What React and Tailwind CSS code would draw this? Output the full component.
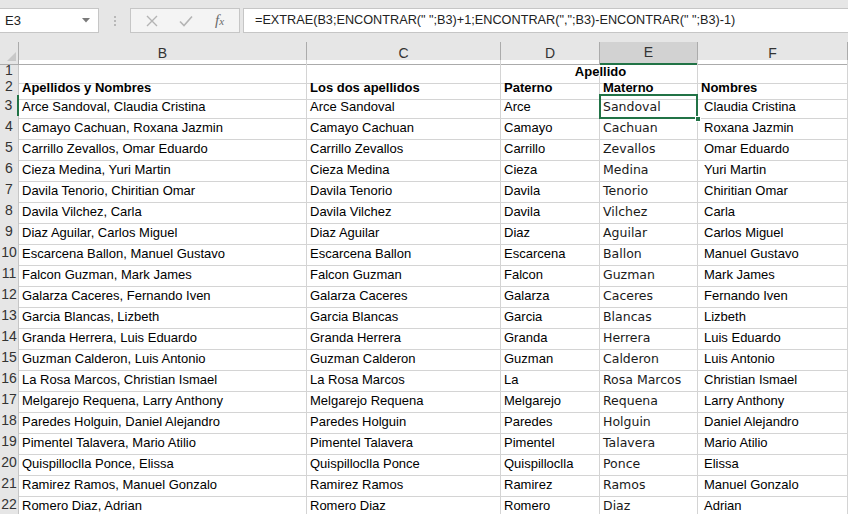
import React from 'react';

const ROWS = [
    ['Arce Sandoval, Claudia Cristina', 'Arce Sandoval', 'Arce', 'Sandoval', 'Claudia Cristina'],
    ['Camayo Cachuan, Roxana Jazmin', 'Camayo Cachuan', 'Camayo', 'Cachuan', 'Roxana Jazmin'],
    ['Carrillo Zevallos, Omar Eduardo', 'Carrillo Zevallos', 'Carrillo', 'Zevallos', 'Omar Eduardo'],
    ['Cieza Medina, Yuri Martin', 'Cieza Medina', 'Cieza', 'Medina', 'Yuri Martin'],
    ['Davila Tenorio, Chiritian Omar', 'Davila Tenorio', 'Davila', 'Tenorio', 'Chiritian Omar'],
    ['Davila Vilchez, Carla', 'Davila Vilchez', 'Davila', 'Vilchez', 'Carla'],
    ['Diaz Aguilar, Carlos Miguel', 'Diaz Aguilar', 'Diaz', 'Aguilar', 'Carlos Miguel'],
    ['Escarcena Ballon, Manuel Gustavo', 'Escarcena Ballon', 'Escarcena', 'Ballon', 'Manuel Gustavo'],
    ['Falcon Guzman, Mark James', 'Falcon Guzman', 'Falcon', 'Guzman', 'Mark James'],
    ['Galarza Caceres, Fernando Iven', 'Galarza Caceres', 'Galarza', 'Caceres', 'Fernando Iven'],
    ['Garcia Blancas, Lizbeth', 'Garcia Blancas', 'Garcia', 'Blancas', 'Lizbeth'],
    ['Granda Herrera, Luis Eduardo', 'Granda Herrera', 'Granda', 'Herrera', 'Luis Eduardo'],
    ['Guzman Calderon, Luis Antonio', 'Guzman Calderon', 'Guzman', 'Calderon', 'Luis Antonio'],
    ['La Rosa Marcos, Christian Ismael', 'La Rosa Marcos', 'La', 'Rosa Marcos', 'Christian Ismael'],
    ['Melgarejo Requena, Larry Anthony', 'Melgarejo Requena', 'Melgarejo', 'Requena', 'Larry Anthony'],
    ['Paredes Holguin, Daniel Alejandro', 'Paredes Holguin', 'Paredes', 'Holguin', 'Daniel Alejandro'],
    ['Pimentel Talavera, Mario Atilio', 'Pimentel Talavera', 'Pimentel', 'Talavera', 'Mario Atilio'],
    ['Quispilloclla Ponce, Elissa', 'Quispilloclla Ponce', 'Quispilloclla', 'Ponce', 'Elissa'],
    ['Ramirez Ramos, Manuel Gonzalo', 'Ramirez Ramos', 'Ramirez', 'Ramos', 'Manuel Gonzalo'],
    ['Romero Diaz, Adrian', 'Romero Diaz', 'Romero', 'Diaz', 'Adrian'],
];

const GRID = 'grid grid-cols-[19px_288px_194px_99px_98px_1fr]';
const CELL = 'border-r border-b border-[#d4d4d4] pl-[3px] flex items-end pb-[2px] whitespace-nowrap overflow-hidden';
const ROWNUM = 'bg-[#e6e6e6] border-r border-b border-[#c6c6c6] text-[#333] flex items-end justify-center pb-[2px] text-[14px]';

function Toolbar() {
    return (
        <div className="flex items-center h-[42px] bg-[#e6e6e6] pb-[1px]">
            {/* name box */}
            <div className="w-[99px] h-[25px] bg-white border border-l-0 border-[#c6c6c6] flex items-center justify-between pl-[5px] pr-[8px] text-[13px] text-[#222]">
                <span>E3</span>
                <svg width="8" height="5" viewBox="0 0 8 5"><path d="M0 0h8L4 4.5z" fill="#7a7a7a" /></svg>
            </div>
            <div className="w-[31px] flex flex-col items-center gap-[2px]">
                <span className="w-[2px] h-[2px] bg-[#b8b8b8]" />
                <span className="w-[2px] h-[2px] bg-[#b8b8b8]" />
                <span className="w-[2px] h-[2px] bg-[#b8b8b8]" />
            </div>
            {/* cancel / enter / fx */}
            <div className="w-[110px] h-[25px] bg-[#f4f4f4] border border-[#c6c6c6] flex items-center justify-around px-[4px]">
                <svg width="12" height="12" viewBox="0 0 12 12">
                    <path d="M1 1L11 11M11 1L1 11" stroke="#b4b4b4" strokeWidth="1.4" />
                </svg>
                <svg width="14" height="12" viewBox="0 0 14 12">
                    <path d="M1 6.5L5 10.5L13 1.5" stroke="#b4b4b4" strokeWidth="1.6" fill="none" />
                </svg>
                <span className="text-[#6a6a6a] italic text-[15px] leading-none" style={{ fontFamily: '"Liberation Serif", serif' }}>
                    f<span className="text-[11px]">x</span>
                </span>
            </div>
            {/* formula */}
            <div className="flex-1 ml-[3px] h-[25px] bg-white border border-r-0 border-[#c6c6c6] flex items-center pl-[11px] text-[12.7px] text-[#222] whitespace-nowrap">
                =EXTRAE(B3;ENCONTRAR(" ";B3)+1;ENCONTRAR(",";B3)-ENCONTRAR(" ";B3)-1)
            </div>
        </div>
    );
}

function ColumnHeaders() {
    const cols = ['B', 'C', 'D', 'E', 'F'];
    return (
        <div className={`${GRID} h-[18px] bg-[#e6e6e6] text-[14px] text-[#333]`}>
            <div className="border-r border-b border-[#ababab] relative">
                <svg className="absolute right-[2px] bottom-[3px]" width="9" height="9" viewBox="0 0 9 9">
                    <path d="M9 0V9H0z" fill="#c8c8c8" />
                </svg>
            </div>
            {cols.map(c => (
                <div
                    key={c}
                    className={c === 'E'
                        ? 'bg-[#d2d2d2] border-r border-[#ababab] border-b-2 border-b-[#217346] flex items-center justify-center'
                        : 'border-r border-b border-[#ababab] flex items-center justify-center'}
                >
                    {c}
                </div>
            ))}
        </div>
    );
}

export default function App() {
    return (
        <div className="w-[848px] h-[514px] overflow-hidden bg-white text-[13px] text-black" style={{ fontFamily: '"Liberation Sans", Arial, sans-serif' }}>
            <Toolbar />
            <ColumnHeaders />

            {/* row 1 */}
            <div className={`${GRID} h-[16px]`}>
                <div className={ROWNUM}>1</div>
                <div className={CELL} />
                <div className={CELL} />
                <div className={`${CELL} col-span-2 justify-center font-bold`}>Apellido</div>
                <div className={CELL} />
            </div>

            {/* row 2 */}
            <div className={`${GRID} h-[19px] font-bold`}>
                <div className={`${ROWNUM} font-normal`}>2</div>
                <div className={CELL}>Apellidos y Nombres</div>
                <div className={CELL}>Los dos apellidos</div>
                <div className={CELL}>Paterno</div>
                <div className={CELL}>Materno</div>
                <div className={CELL}>Nombres</div>
            </div>

            {ROWS.map((r, i) => {
                const n = i + 3;
                return (
                    <div key={n} className={`${GRID} h-[21px]`}>
                        <div className={n === 3 ? `${ROWNUM} border-r-2 border-r-[#217346] bg-[#d2d2d2]` : ROWNUM}>{n}</div>
                        <div className={CELL}>{r[0]}</div>
                        <div className={CELL}>{r[1]}</div>
                        <div className={CELL}>{r[2]}</div>
                        <div
                            className={`${CELL} relative text-[12.5px] text-[#1a1a1a] overflow-visible`}
                            style={{ fontFamily: '"DejaVu Sans", Verdana, sans-serif' }}
                        >
                            <span className="translate-y-[1px]">{r[3]}</span>
                            {n === 3 && (
                                <>
                                    <span className="absolute z-10 -left-[1px] -top-[1px] -right-[1px] -bottom-[1px] border-2 border-[#217346]" />
                                    <span className="absolute z-10 -right-[4px] -bottom-[4px] w-[6px] h-[6px] bg-[#217346] border border-white" />
                                </>
                            )}
                        </div>
                        <div className={`${CELL} pl-[6px]`}>{r[4]}</div>
                    </div>
                );
            })}
        </div>
    );
}
